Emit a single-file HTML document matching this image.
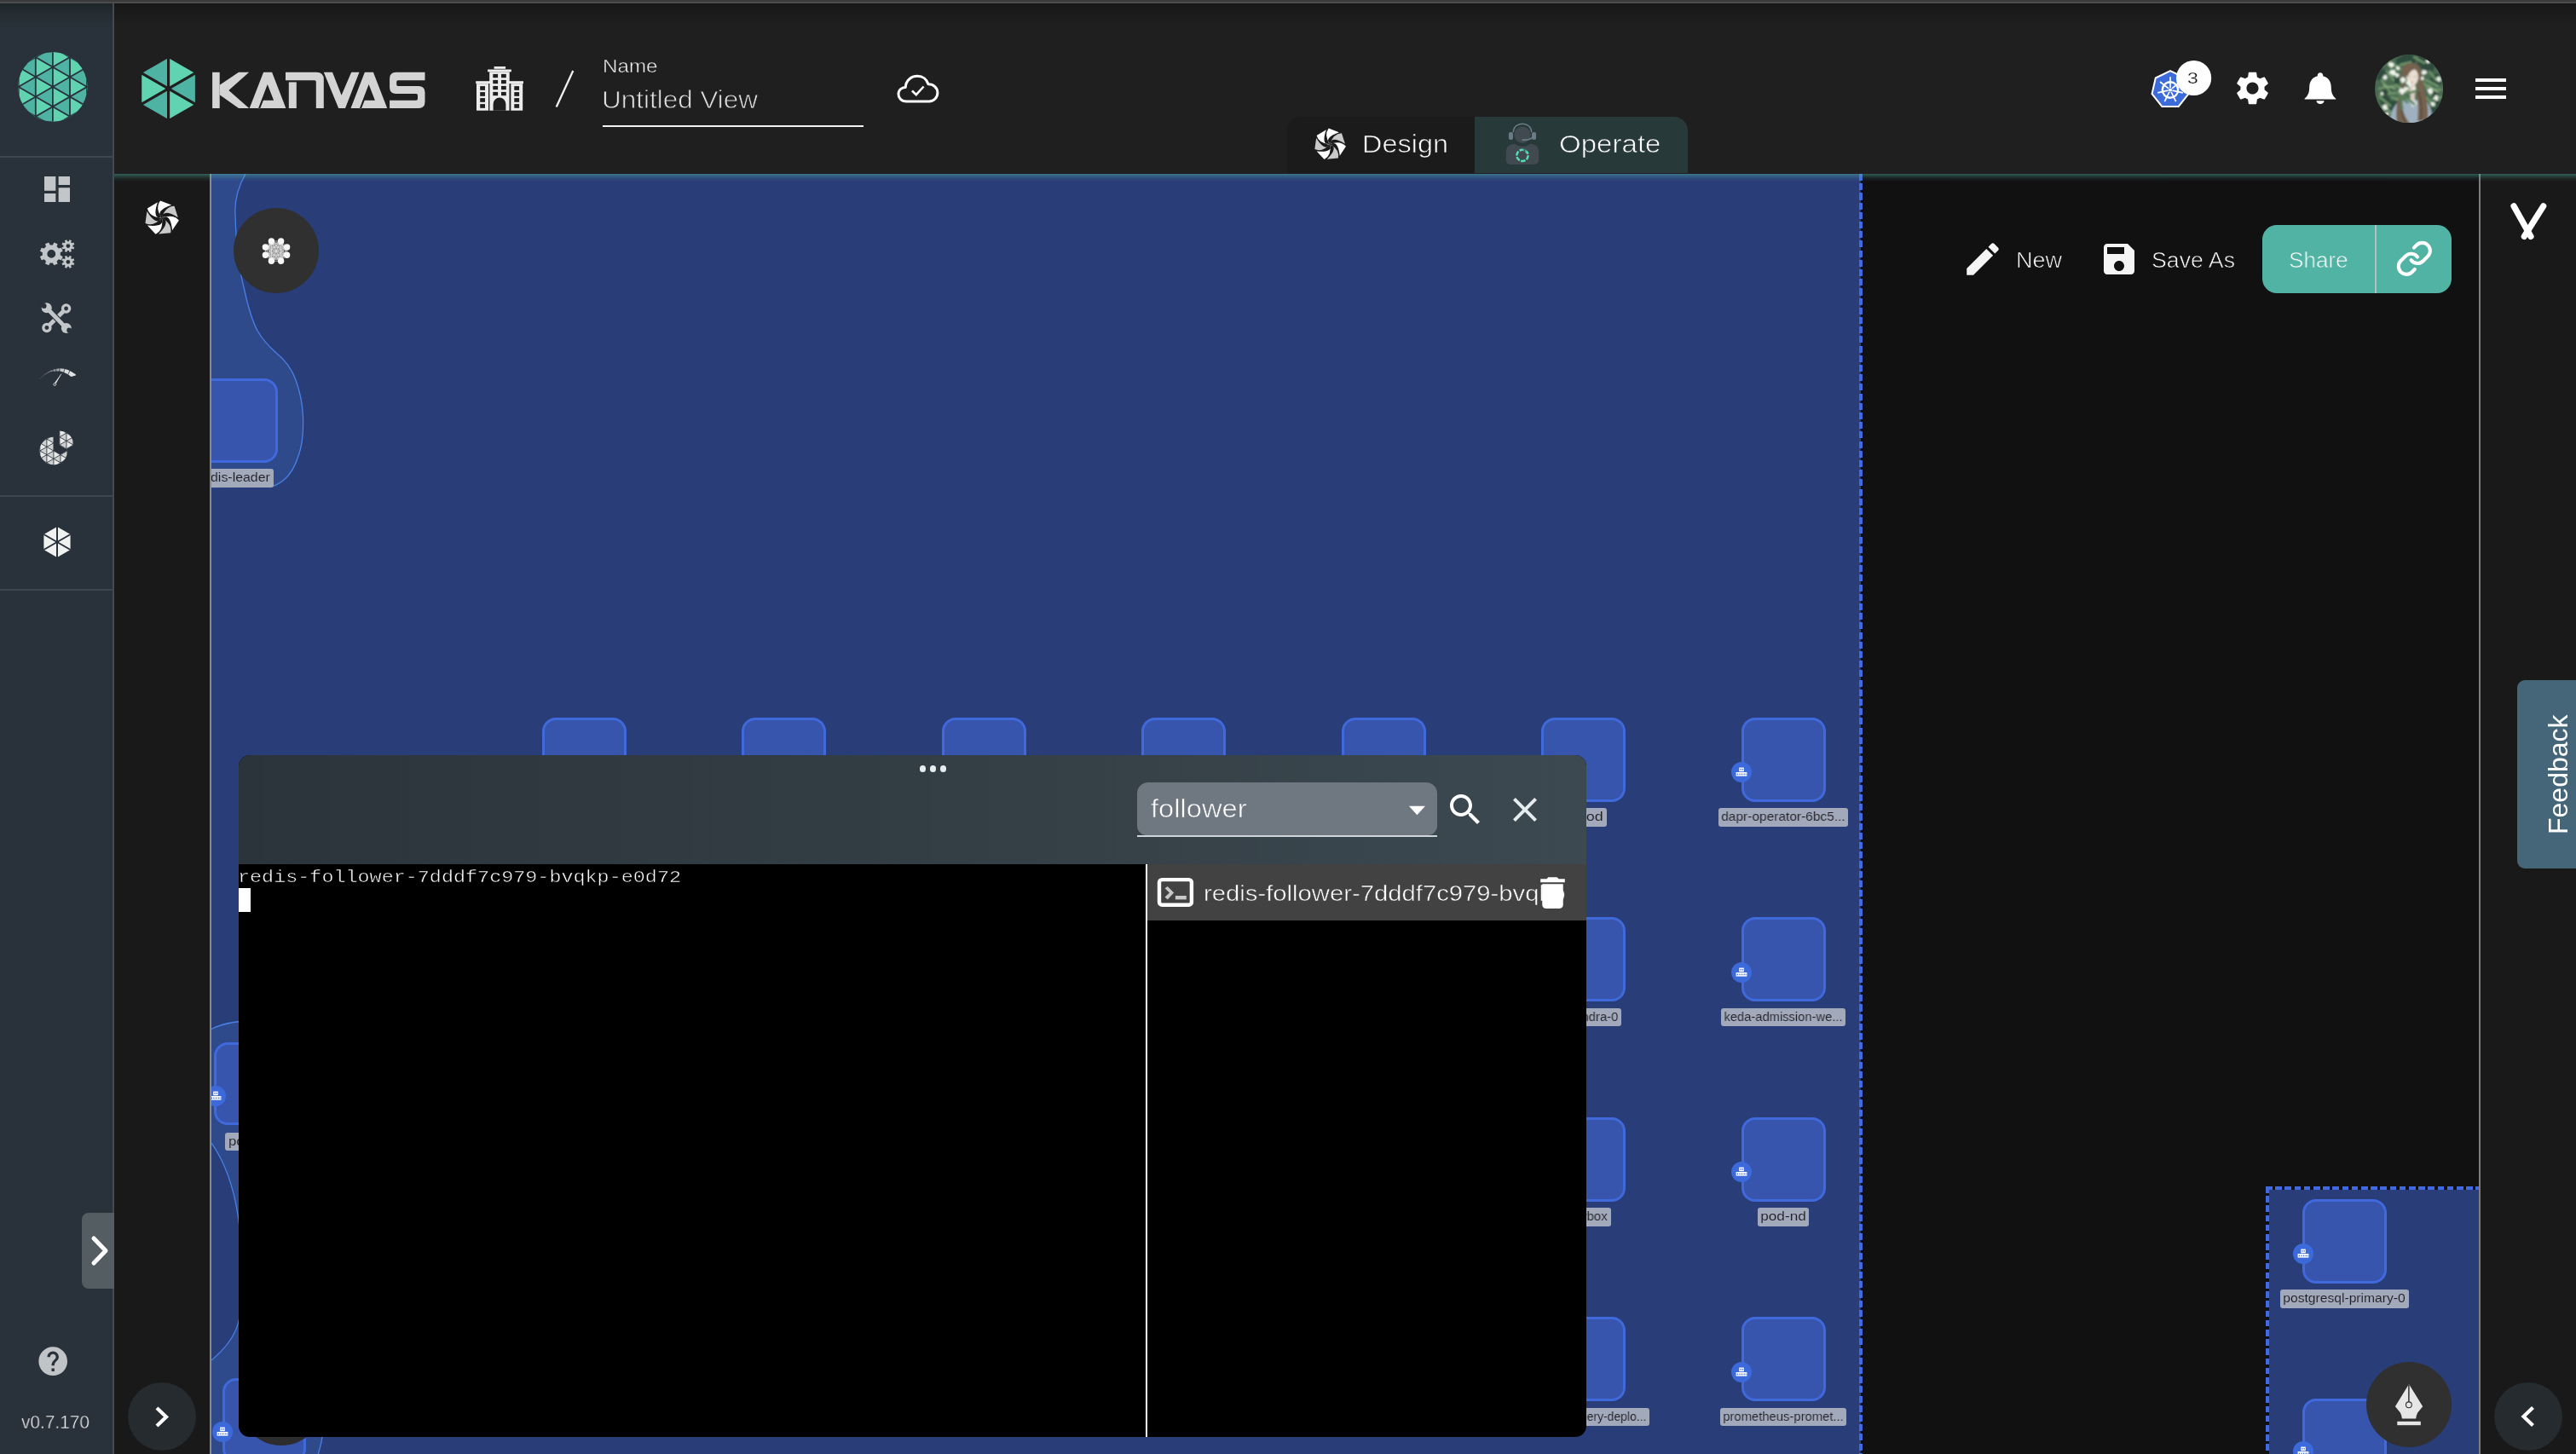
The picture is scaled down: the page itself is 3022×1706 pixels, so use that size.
<!DOCTYPE html>
<html>
<head>
<meta charset="utf-8">
<title>Kanvas</title>
<style>
*{box-sizing:border-box;margin:0;padding:0}
html,body{width:3022px;height:1706px;overflow:hidden;background:#111111;font-family:"Liberation Sans",sans-serif;}
.abs{position:absolute}
#root{position:relative;width:3022px;height:1706px;overflow:hidden;background:#111111}
.t{position:absolute;white-space:nowrap;line-height:1;transform-origin:0 0;will-change:transform}
.node{position:absolute;width:99px;height:99px;border:3.4px solid #4069dc;border-radius:16px;background:#3855ae}
.badge{position:absolute;width:24px;height:24px;border-radius:50%;background:#3d6adb}
.lbl{position:absolute;height:22px;border-radius:3px;background:#a3aabe;color:#1c1c1c;font-size:15.5px;line-height:22px;text-align:center;white-space:nowrap;overflow:hidden}
.lbl span{display:inline-block;transform-origin:50% 50%}
</style>
</head>
<body>
<div id="root">
<div class="abs" style="left:0;top:4px;width:132px;height:1702px;background:#29313a"></div>
<div class="abs" style="left:0;top:4px;width:132px;height:30px;background:linear-gradient(#1d2528 0,#232b30 30%,#272f36 62%,#29313a 100%)"></div>
<div class="abs" style="left:132px;top:4px;width:2px;height:1702px;background:#424b52"></div>
<div class="abs" style="left:0;top:183px;width:132px;height:2px;background:#3c464e"></div>
<div class="abs" style="left:0;top:581px;width:132px;height:2px;background:#3c464e"></div>
<div class="abs" style="left:0;top:691px;width:132px;height:2px;background:#3c464e"></div>
<div class="abs" style="left:134px;top:4px;width:2888px;height:200px;background:#1f1f1f"></div>
<div class="abs" style="left:134px;top:4px;width:2888px;height:24px;background:linear-gradient(#161616,#1f1f1f)"></div>
<div class="abs" style="left:134px;top:204px;width:112px;height:1502px;background:#191919"></div>
<div class="abs" style="left:246px;top:204px;width:2px;height:1502px;background:#8a8a8a"></div>
<div id="canvas" class="abs" style="left:248px;top:204px;width:1933px;height:1502px;background:#293d78;overflow:hidden">
<div class="abs" style="left:-248px;top:-204px;width:3022px;height:1706px">
<svg class="abs" style="left:0;top:0" width="3022" height="1706" viewBox="0 0 3022 1706">
<path d="M248,204 L288,204 C278,222 275,238 276,252 C277,290 281,318 286.5,339 C291,360 295,375 302,388 C309,400 316,407 324,414 C334,422 342,432 347,446 C352,460 355,474 355.5,489 C356,505 355,520 351,532 C347,546 341,557 332,564 C326,568.5 322,570.5 316,571.5 L248,573 Z" fill="#2f4a8b"/>
<path d="M288,204 C278,222 275,238 276,252 C277,290 281,318 286.5,339 C291,360 295,375 302,388 C309,400 316,407 324,414 C334,422 342,432 347,446 C352,460 355,474 355.5,489 C356,505 355,520 351,532 C347,546 341,557 332,564 C326,568.5 322,570.5 316,571.5" fill="none" stroke="#4a80e6" stroke-width="1.3"/>
<path d="M248,1207.5 Q262,1200.5 281,1198.5 L281,1440 Q274,1378 248,1341 Z" fill="#2f4a8b"/>
<path d="M248,1207.5 Q262,1200.5 281,1198.5" fill="none" stroke="#4a80e6" stroke-width="1.3"/>
<path d="M248,1341 Q274,1378 281,1440" fill="none" stroke="#4a80e6" stroke-width="1.3"/>
<path d="M248,1596 Q277,1572 281,1545 L281,1680 L379,1680 Q377,1696 372,1710 L248,1710 Z" fill="#2f4a8b"/>
<path d="M248,1596 Q277,1572 281,1545" fill="none" stroke="#4a80e6" stroke-width="1.3"/>
<path d="M379,1680 Q377,1696 372,1710" fill="none" stroke="#4a80e6" stroke-width="1.3"/>
</svg>
<div class="node" style="left:635.7px;top:841.7px"></div>
<div class="node" style="left:870.2px;top:841.7px"></div>
<div class="node" style="left:1104.6px;top:841.7px"></div>
<div class="node" style="left:1339.1px;top:841.7px"></div>
<div class="node" style="left:1573.6px;top:841.7px"></div>
<div class="node" style="left:1808.0px;top:841.7px"></div>
<div class="node" style="left:2042.5px;top:841.7px"></div>
<div class="node" style="left:1808.0px;top:1076.2px"></div>
<div class="node" style="left:2042.5px;top:1076.2px"></div>
<div class="node" style="left:1808.0px;top:1310.7px"></div>
<div class="node" style="left:2042.5px;top:1310.7px"></div>
<div class="node" style="left:1808.0px;top:1545.2px"></div>
<div class="node" style="left:2042.5px;top:1545.2px"></div>
<div class="badge" style="left:2031.0px;top:894.0px"><svg style="position:absolute;left:5px;top:6px" width="14" height="12" viewBox="0 0 14 12"><g fill="#fff"><rect x="4.2" y="0.6" width="5.6" height="4.6"/><rect x="0.6" y="6" width="12.8" height="4.6"/></g><g fill="#3d6adb"><rect x="5.4" y="2" width="1.2" height="1.6"/><rect x="7.6" y="2" width="1.2" height="1.6"/><rect x="1.8" y="7.6" width="1.2" height="1.6"/><rect x="4.4" y="7.6" width="1.2" height="1.6"/><rect x="7" y="7.6" width="1.2" height="1.6"/><rect x="9.6" y="7.6" width="1.2" height="1.6"/><rect x="11.6" y="7.6" width="0.9" height="1.6"/></g></svg></div>
<div class="badge" style="left:2031.0px;top:1128.5px"><svg style="position:absolute;left:5px;top:6px" width="14" height="12" viewBox="0 0 14 12"><g fill="#fff"><rect x="4.2" y="0.6" width="5.6" height="4.6"/><rect x="0.6" y="6" width="12.8" height="4.6"/></g><g fill="#3d6adb"><rect x="5.4" y="2" width="1.2" height="1.6"/><rect x="7.6" y="2" width="1.2" height="1.6"/><rect x="1.8" y="7.6" width="1.2" height="1.6"/><rect x="4.4" y="7.6" width="1.2" height="1.6"/><rect x="7" y="7.6" width="1.2" height="1.6"/><rect x="9.6" y="7.6" width="1.2" height="1.6"/><rect x="11.6" y="7.6" width="0.9" height="1.6"/></g></svg></div>
<div class="badge" style="left:2031.0px;top:1363.0px"><svg style="position:absolute;left:5px;top:6px" width="14" height="12" viewBox="0 0 14 12"><g fill="#fff"><rect x="4.2" y="0.6" width="5.6" height="4.6"/><rect x="0.6" y="6" width="12.8" height="4.6"/></g><g fill="#3d6adb"><rect x="5.4" y="2" width="1.2" height="1.6"/><rect x="7.6" y="2" width="1.2" height="1.6"/><rect x="1.8" y="7.6" width="1.2" height="1.6"/><rect x="4.4" y="7.6" width="1.2" height="1.6"/><rect x="7" y="7.6" width="1.2" height="1.6"/><rect x="9.6" y="7.6" width="1.2" height="1.6"/><rect x="11.6" y="7.6" width="0.9" height="1.6"/></g></svg></div>
<div class="badge" style="left:2031.0px;top:1597.5px"><svg style="position:absolute;left:5px;top:6px" width="14" height="12" viewBox="0 0 14 12"><g fill="#fff"><rect x="4.2" y="0.6" width="5.6" height="4.6"/><rect x="0.6" y="6" width="12.8" height="4.6"/></g><g fill="#3d6adb"><rect x="5.4" y="2" width="1.2" height="1.6"/><rect x="7.6" y="2" width="1.2" height="1.6"/><rect x="1.8" y="7.6" width="1.2" height="1.6"/><rect x="4.4" y="7.6" width="1.2" height="1.6"/><rect x="7" y="7.6" width="1.2" height="1.6"/><rect x="9.6" y="7.6" width="1.2" height="1.6"/><rect x="11.6" y="7.6" width="0.9" height="1.6"/></g></svg></div>
<div class="abs" style="left:2016.2px;top:948.0px;width:151.9px;height:21.7px;border-radius:3px;background:#a2a9bb;overflow:hidden"><div style="position:absolute;will-change:transform;left:50%;transform:translateX(-50%) scaleX(0.9992);transform-origin:50% 0;top:2.3px;font-size:15.5px;line-height:1;color:#1e1e22;-webkit-text-stroke:0.12px #a2a9bb;white-space:nowrap"><span id="l_dapr">dapr-operator-6bc5...</span></div></div>
<div class="abs" style="left:2019.0px;top:1182.5px;width:146.0px;height:21.7px;border-radius:3px;background:#a2a9bb;overflow:hidden"><div style="position:absolute;will-change:transform;left:50%;transform:translateX(-50%) scaleX(0.9491);transform-origin:50% 0;top:2.3px;font-size:15.5px;line-height:1;color:#1e1e22;-webkit-text-stroke:0.12px #a2a9bb;white-space:nowrap"><span id="l_keda">keda-admission-we...</span></div></div>
<div class="abs" style="left:2061.8px;top:1417.1px;width:60.4px;height:21.7px;border-radius:3px;background:#a2a9bb;overflow:hidden"><div style="position:absolute;will-change:transform;left:50%;transform:translateX(-50%) scaleX(1.1105);transform-origin:50% 0;top:2.3px;font-size:15.5px;line-height:1;color:#1e1e22;-webkit-text-stroke:0.12px #a2a9bb;white-space:nowrap"><span id="l_podnd">pod-nd</span></div></div>
<div class="abs" style="left:2017.9px;top:1651.6px;width:148.3px;height:21.7px;border-radius:3px;background:#a2a9bb;overflow:hidden"><div style="position:absolute;will-change:transform;left:50%;transform:translateX(-50%) scaleX(0.9549);transform-origin:50% 0;top:2.3px;font-size:15.5px;line-height:1;color:#1e1e22;-webkit-text-stroke:0.12px #a2a9bb;white-space:nowrap"><span id="l_prom">prometheus-promet...</span></div></div>
<div class="abs" style="left:1830.8px;top:948.0px;width:54.0px;height:21.7px;border-radius:3px;background:#a2a9bb;overflow:hidden"><div style="position:absolute;will-change:transform;right:3.7px;transform:scaleX(1.1600);transform-origin:100% 0;top:2.3px;font-size:15.5px;line-height:1;color:#1e1e22;-webkit-text-stroke:0.12px #a2a9bb;white-space:nowrap"><span id="l_od">a-pod</span></div></div>
<div class="abs" style="left:1813.2px;top:1182.5px;width:89.2px;height:21.7px;border-radius:3px;background:#a2a9bb;overflow:hidden"><div style="position:absolute;will-change:transform;right:3.7px;transform:scaleX(0.9555);transform-origin:100% 0;top:2.3px;font-size:15.5px;line-height:1;color:#1e1e22;-webkit-text-stroke:0.12px #a2a9bb;white-space:nowrap"><span id="l_dra">cassandra-0</span></div></div>
<div class="abs" style="left:1825.8px;top:1417.1px;width:64.0px;height:21.7px;border-radius:3px;background:#a2a9bb;overflow:hidden"><div style="position:absolute;will-change:transform;right:3.7px;transform:scaleX(0.9700);transform-origin:100% 0;top:2.3px;font-size:15.5px;line-height:1;color:#1e1e22;-webkit-text-stroke:0.12px #a2a9bb;white-space:nowrap"><span id="l_box">busybox</span></div></div>
<div class="abs" style="left:1780.9px;top:1651.6px;width:153.8px;height:21.7px;border-radius:3px;background:#a2a9bb;overflow:hidden"><div style="position:absolute;will-change:transform;right:3.7px;transform:scaleX(0.9008);transform-origin:100% 0;top:2.3px;font-size:15.5px;line-height:1;color:#1e1e22;-webkit-text-stroke:0.12px #a2a9bb;white-space:nowrap"><span id="l_ery">meshery-deplo...</span></div></div>
<div class="node" style="left:200px;top:444px;width:126px;height:99px"></div>
<div class="abs" style="left:230.0px;top:550.0px;width:91.4px;height:21.7px;border-radius:3px;background:#a2a9bb;overflow:hidden"><div style="position:absolute;will-change:transform;right:4.4px;transform:scaleX(1.0262);transform-origin:100% 0;top:2.3px;font-size:15.5px;line-height:1;color:#1e1e22;-webkit-text-stroke:0.12px #a2a9bb;white-space:nowrap"><span id="l_leader">redis-leader</span></div></div>
<div class="node" style="left:250.7px;top:1222.7px;width:99px;height:97.5px"></div>
<div class="badge" style="left:240.6px;top:1273.8px"><svg style="position:absolute;left:5px;top:6px" width="14" height="12" viewBox="0 0 14 12"><g fill="#fff"><rect x="4.2" y="0.6" width="5.6" height="4.6"/><rect x="0.6" y="6" width="12.8" height="4.6"/></g><g fill="#3d6adb"><rect x="5.4" y="2" width="1.2" height="1.6"/><rect x="7.6" y="2" width="1.2" height="1.6"/><rect x="1.8" y="7.6" width="1.2" height="1.6"/><rect x="4.4" y="7.6" width="1.2" height="1.6"/><rect x="7" y="7.6" width="1.2" height="1.6"/><rect x="9.6" y="7.6" width="1.2" height="1.6"/><rect x="11.6" y="7.6" width="0.9" height="1.6"/></g></svg></div>
<div class="abs" style="left:264.0px;top:1328.6px;width:66.0px;height:21.7px;border-radius:3px;background:#a2a9bb;overflow:hidden"><div style="position:absolute;will-change:transform;left:4.0px;transform:scaleX(1.0821);transform-origin:0 0;top:2.3px;font-size:15.5px;line-height:1;color:#1e1e22;-webkit-text-stroke:0.12px #a2a9bb;white-space:nowrap"><span id="l_pc">pod</span></div></div>
<div class="node" style="left:260.5px;top:1617px;width:98.5px;height:99px"></div>
<div class="abs" style="left:280px;top:1596px;width:100px;height:100px;border-radius:50%;background:#2d2d2f"></div>
<div class="badge" style="left:249.0px;top:1668.4px"><svg style="position:absolute;left:5px;top:6px" width="14" height="12" viewBox="0 0 14 12"><g fill="#fff"><rect x="4.2" y="0.6" width="5.6" height="4.6"/><rect x="0.6" y="6" width="12.8" height="4.6"/></g><g fill="#3d6adb"><rect x="5.4" y="2" width="1.2" height="1.6"/><rect x="7.6" y="2" width="1.2" height="1.6"/><rect x="1.8" y="7.6" width="1.2" height="1.6"/><rect x="4.4" y="7.6" width="1.2" height="1.6"/><rect x="7" y="7.6" width="1.2" height="1.6"/><rect x="9.6" y="7.6" width="1.2" height="1.6"/><rect x="11.6" y="7.6" width="0.9" height="1.6"/></g></svg></div>
<div class="abs" style="left:273.8px;top:243.9px;width:100px;height:100px;border-radius:50%;background:#303030"></div>
<svg class="abs" style="left:299.8px;top:269.9px" width="48" height="48" viewBox="-24 -24 48 48"><rect x="-9" y="-8.5" width="18" height="18" rx="3" fill="#9a9a9a"/><g stroke="#e8e8e8" stroke-width="0.7" fill="none"><line x1="-5.6" y1="-11.0" x2="5.6" y2="-11.0"/><line x1="-5.6" y1="-11.0" x2="12.6" y2="-4.0"/><line x1="-5.6" y1="-11.0" x2="12.6" y2="5.2"/><line x1="-5.6" y1="-11.0" x2="5.6" y2="12.2"/><line x1="-5.6" y1="-11.0" x2="-5.6" y2="12.2"/><line x1="-5.6" y1="-11.0" x2="-12.6" y2="5.2"/><line x1="-5.6" y1="-11.0" x2="-12.6" y2="-4.0"/><line x1="5.6" y1="-11.0" x2="12.6" y2="-4.0"/><line x1="5.6" y1="-11.0" x2="12.6" y2="5.2"/><line x1="5.6" y1="-11.0" x2="5.6" y2="12.2"/><line x1="5.6" y1="-11.0" x2="-5.6" y2="12.2"/><line x1="5.6" y1="-11.0" x2="-12.6" y2="5.2"/><line x1="5.6" y1="-11.0" x2="-12.6" y2="-4.0"/><line x1="12.6" y1="-4.0" x2="12.6" y2="5.2"/><line x1="12.6" y1="-4.0" x2="5.6" y2="12.2"/><line x1="12.6" y1="-4.0" x2="-5.6" y2="12.2"/><line x1="12.6" y1="-4.0" x2="-12.6" y2="5.2"/><line x1="12.6" y1="-4.0" x2="-12.6" y2="-4.0"/><line x1="12.6" y1="5.2" x2="5.6" y2="12.2"/><line x1="12.6" y1="5.2" x2="-5.6" y2="12.2"/><line x1="12.6" y1="5.2" x2="-12.6" y2="5.2"/><line x1="12.6" y1="5.2" x2="-12.6" y2="-4.0"/><line x1="5.6" y1="12.2" x2="-5.6" y2="12.2"/><line x1="5.6" y1="12.2" x2="-12.6" y2="5.2"/><line x1="5.6" y1="12.2" x2="-12.6" y2="-4.0"/><line x1="-5.6" y1="12.2" x2="-12.6" y2="5.2"/><line x1="-5.6" y1="12.2" x2="-12.6" y2="-4.0"/><line x1="-12.6" y1="5.2" x2="-12.6" y2="-4.0"/></g><circle cx="-5.6" cy="-11.0" r="3.7" fill="#f7f7f7"/><circle cx="5.6" cy="-11.0" r="3.7" fill="#f7f7f7"/><circle cx="12.6" cy="-4.0" r="3.7" fill="#f7f7f7"/><circle cx="12.6" cy="5.2" r="3.7" fill="#f7f7f7"/><circle cx="5.6" cy="12.2" r="3.7" fill="#f7f7f7"/><circle cx="-5.6" cy="12.2" r="3.7" fill="#f7f7f7"/><circle cx="-12.6" cy="5.2" r="3.7" fill="#f7f7f7"/><circle cx="-12.6" cy="-4.0" r="3.7" fill="#f7f7f7"/></svg>
</div>
</div>
<div class="abs" style="left:2181px;top:204px;width:2px;height:1502px;background:#293d78"></div>
<div class="abs" style="left:2183px;top:204px;width:3px;height:1502px;background:#0b0b0b"></div>
<div class="abs" style="left:2180.8px;top:203.6px;width:4.2px;height:1503px;background:repeating-linear-gradient(180deg,#4169e1 0,#4169e1 8.1px,transparent 8.1px,transparent 11.2px)"></div>
<div class="abs" style="left:2908px;top:204px;width:2px;height:1502px;background:#7d7d7d"></div>
<div class="abs" style="left:2910px;top:204px;width:112px;height:1502px;background:#191919"></div>
<div class="abs" style="left:134px;top:203.7px;width:2888px;height:9px;background:linear-gradient(rgba(81,179,163,0.46) 0,rgba(81,179,163,0.30) 25%,rgba(81,179,163,0.10) 60%,rgba(81,179,163,0) 100%)"></div>
<div class="abs" style="left:0;top:0;width:3022px;height:4px;background:linear-gradient(#3a3a3a 0,#3a3a3a 50%,#4a4c4b 50%,#4a4c4b 100%)"></div>
<!-- SIDEBAR CONTENT -->
<svg class="abs" style="left:12px;top:52px" width="100" height="100" viewBox="0 0 100 100"><defs><clipPath id="lc"><circle cx="49.9" cy="49.9" r="40.6"/></clipPath></defs><g clip-path="url(#lc)"><rect x="0" y="0" width="100" height="100" fill="#4fb3a3"/><polygon points="-10.40,-31.30 -10.40,-8.10 9.70,-19.70" fill="#60d3b1"/><polygon points="-10.40,-8.10 -10.40,15.10 9.70,3.50" fill="#60d3b1"/><polygon points="-10.40,15.10 -10.40,38.30 9.70,26.70" fill="#60d3b1"/><polygon points="-10.40,38.30 -10.40,61.50 9.70,49.90" fill="#60d3b1"/><polygon points="-10.40,61.50 -10.40,84.70 9.70,73.10" fill="#60d3b1"/><polygon points="-10.40,84.70 -10.40,107.90 9.70,96.30" fill="#60d3b1"/><polygon points="-10.40,107.90 -10.40,131.10 9.70,119.50" fill="#60d3b1"/><polygon points="-10.40,131.10 -10.40,154.30 9.70,142.70" fill="#60d3b1"/><polygon points="9.70,-42.90 9.70,-19.70 29.80,-31.30" fill="#60d3b1"/><polygon points="9.70,-19.70 9.70,3.50 29.80,-8.10" fill="#60d3b1"/><polygon points="9.70,3.50 9.70,26.70 29.80,15.10" fill="#60d3b1"/><polygon points="9.70,26.70 9.70,49.90 29.80,38.30" fill="#60d3b1"/><polygon points="9.70,49.90 9.70,73.10 29.80,61.50" fill="#60d3b1"/><polygon points="9.70,73.10 9.70,96.30 29.80,84.70" fill="#60d3b1"/><polygon points="9.70,96.30 9.70,119.50 29.80,107.90" fill="#60d3b1"/><polygon points="9.70,119.50 9.70,142.70 29.80,131.10" fill="#60d3b1"/><polygon points="29.80,-31.30 29.80,-8.10 49.90,-19.70" fill="#60d3b1"/><polygon points="29.80,-8.10 29.80,15.10 49.90,3.50" fill="#60d3b1"/><polygon points="29.80,15.10 29.80,38.30 49.90,26.70" fill="#60d3b1"/><polygon points="29.80,38.30 29.80,61.50 49.90,49.90" fill="#60d3b1"/><polygon points="29.80,61.50 29.80,84.70 49.90,73.10" fill="#60d3b1"/><polygon points="29.80,84.70 29.80,107.90 49.90,96.30" fill="#60d3b1"/><polygon points="29.80,107.90 29.80,131.10 49.90,119.50" fill="#60d3b1"/><polygon points="29.80,131.10 29.80,154.30 49.90,142.70" fill="#60d3b1"/><polygon points="49.90,-42.90 49.90,-19.70 70.00,-31.30" fill="#60d3b1"/><polygon points="49.90,-19.70 49.90,3.50 70.00,-8.10" fill="#60d3b1"/><polygon points="49.90,3.50 49.90,26.70 70.00,15.10" fill="#60d3b1"/><polygon points="49.90,26.70 49.90,49.90 70.00,38.30" fill="#60d3b1"/><polygon points="49.90,49.90 49.90,73.10 70.00,61.50" fill="#60d3b1"/><polygon points="49.90,73.10 49.90,96.30 70.00,84.70" fill="#60d3b1"/><polygon points="49.90,96.30 49.90,119.50 70.00,107.90" fill="#60d3b1"/><polygon points="49.90,119.50 49.90,142.70 70.00,131.10" fill="#60d3b1"/><polygon points="70.00,-31.30 70.00,-8.10 90.10,-19.70" fill="#60d3b1"/><polygon points="70.00,-8.10 70.00,15.10 90.10,3.50" fill="#60d3b1"/><polygon points="70.00,15.10 70.00,38.30 90.10,26.70" fill="#60d3b1"/><polygon points="70.00,38.30 70.00,61.50 90.10,49.90" fill="#60d3b1"/><polygon points="70.00,61.50 70.00,84.70 90.10,73.10" fill="#60d3b1"/><polygon points="70.00,84.70 70.00,107.90 90.10,96.30" fill="#60d3b1"/><polygon points="70.00,107.90 70.00,131.10 90.10,119.50" fill="#60d3b1"/><polygon points="70.00,131.10 70.00,154.30 90.10,142.70" fill="#60d3b1"/><polygon points="90.10,-42.90 90.10,-19.70 110.20,-31.30" fill="#60d3b1"/><polygon points="90.10,-19.70 90.10,3.50 110.20,-8.10" fill="#60d3b1"/><polygon points="90.10,3.50 90.10,26.70 110.20,15.10" fill="#60d3b1"/><polygon points="90.10,26.70 90.10,49.90 110.20,38.30" fill="#60d3b1"/><polygon points="90.10,49.90 90.10,73.10 110.20,61.50" fill="#60d3b1"/><polygon points="90.10,73.10 90.10,96.30 110.20,84.70" fill="#60d3b1"/><polygon points="90.10,96.30 90.10,119.50 110.20,107.90" fill="#60d3b1"/><polygon points="90.10,119.50 90.10,142.70 110.20,131.10" fill="#60d3b1"/><g stroke="#29313a" stroke-width="1.8"><line x1="9.70" y1="0" x2="9.70" y2="100"/><line x1="29.80" y1="0" x2="29.80" y2="100"/><line x1="49.90" y1="0" x2="49.90" y2="100"/><line x1="70.00" y1="0" x2="70.00" y2="100"/><line x1="90.10" y1="0" x2="90.10" y2="100"/><line x1="0" y1="-94.90" x2="100" y2="-37.19"/><line x1="0" y1="-37.30" x2="100" y2="-95.01"/><line x1="0" y1="-71.70" x2="100" y2="-13.99"/><line x1="0" y1="-14.10" x2="100" y2="-71.81"/><line x1="0" y1="-48.50" x2="100" y2="9.21"/><line x1="0" y1="9.10" x2="100" y2="-48.61"/><line x1="0" y1="-25.30" x2="100" y2="32.41"/><line x1="0" y1="32.30" x2="100" y2="-25.41"/><line x1="0" y1="-2.10" x2="100" y2="55.61"/><line x1="0" y1="55.50" x2="100" y2="-2.21"/><line x1="0" y1="21.10" x2="100" y2="78.81"/><line x1="0" y1="78.70" x2="100" y2="20.99"/><line x1="0" y1="44.30" x2="100" y2="102.01"/><line x1="0" y1="101.90" x2="100" y2="44.19"/><line x1="0" y1="67.50" x2="100" y2="125.21"/><line x1="0" y1="125.10" x2="100" y2="67.39"/><line x1="0" y1="90.70" x2="100" y2="148.41"/><line x1="0" y1="148.30" x2="100" y2="90.59"/><line x1="0" y1="113.90" x2="100" y2="171.61"/><line x1="0" y1="171.50" x2="100" y2="113.79"/><line x1="0" y1="137.10" x2="100" y2="194.81"/><line x1="0" y1="194.70" x2="100" y2="136.99"/></g></g></svg>
<!-- dashboard icon -->
<svg class="abs" style="left:47px;top:202px" width="40" height="40" viewBox="0 0 24 24"><path fill="#c3c6c8" d="M3 13h8V3H3v10zm0 8h8v-6H3v6zm10 0h8V11h-8v10zm0-18v6h8V3h-8z"/></svg>
<!-- gears / tools / gauge / pie / hexagon : one svg in root coordinates -->
<svg class="abs" style="left:0;top:0" width="134" height="720" viewBox="0 0 134 720">
<path fill="#c3c6c8" fill-rule="evenodd" d="M70.78,299.48 L73.65,300.99 L71.92,305.15 L68.83,304.20 L66.60,306.43 L67.55,309.52 L63.39,311.25 L61.88,308.38 L58.72,308.38 L57.21,311.25 L53.05,309.52 L54.00,306.43 L51.77,304.20 L48.68,305.15 L46.95,300.99 L49.82,299.48 L49.82,296.32 L46.95,294.81 L48.68,290.65 L51.77,291.60 L54.00,289.37 L53.05,286.28 L57.21,284.55 L58.72,287.42 L61.88,287.42 L63.39,284.55 L67.55,286.28 L66.60,289.37 L68.83,291.60 L71.92,290.65 L73.65,294.81 L70.78,296.32Z M55.40,297.90 a4.90,4.90 0 1,0 9.80,0 a4.90,4.90 0 1,0 -9.80,0Z"/><path fill="#c3c6c8" fill-rule="evenodd" d="M85.34,289.42 L87.30,290.32 L86.35,292.62 L84.32,291.87 L83.17,293.02 L83.92,295.05 L81.62,296.00 L80.72,294.04 L79.08,294.04 L78.18,296.00 L75.88,295.05 L76.63,293.02 L75.48,291.87 L73.45,292.62 L72.50,290.32 L74.46,289.42 L74.46,287.78 L72.50,286.88 L73.45,284.58 L75.48,285.33 L76.63,284.18 L75.88,282.15 L78.18,281.20 L79.08,283.16 L80.72,283.16 L81.62,281.20 L83.92,282.15 L83.17,284.18 L84.32,285.33 L86.35,284.58 L87.30,286.88 L85.34,287.78Z M77.50,288.60 a2.40,2.40 0 1,0 4.80,0 a2.40,2.40 0 1,0 -4.80,0Z"/><path fill="#c3c6c8" fill-rule="evenodd" d="M85.34,308.12 L87.30,309.02 L86.35,311.32 L84.32,310.57 L83.17,311.72 L83.92,313.75 L81.62,314.70 L80.72,312.74 L79.08,312.74 L78.18,314.70 L75.88,313.75 L76.63,311.72 L75.48,310.57 L73.45,311.32 L72.50,309.02 L74.46,308.12 L74.46,306.48 L72.50,305.58 L73.45,303.28 L75.48,304.03 L76.63,302.88 L75.88,300.85 L78.18,299.90 L79.08,301.86 L80.72,301.86 L81.62,299.90 L83.92,300.85 L83.17,302.88 L84.32,304.03 L86.35,303.28 L87.30,305.58 L85.34,306.48Z M77.50,307.30 a2.40,2.40 0 1,0 4.80,0 a2.40,2.40 0 1,0 -4.80,0Z"/>
<!-- tools: crossed wrenches -->
<g>
<line x1="54.9" y1="384.5" x2="77.6" y2="362" stroke="#c3c6c8" stroke-width="4.9"/>
<circle cx="77.6" cy="362" r="5.7" fill="#c3c6c8"/><circle cx="54.9" cy="384.5" r="5.7" fill="#c3c6c8"/>
<circle cx="77.6" cy="362" r="2.4" fill="#29313a"/><circle cx="54.9" cy="384.5" r="2.4" fill="#29313a"/>
<line x1="59" y1="365.7" x2="73.6" y2="380.8" stroke="#29313a" stroke-width="7"/>
<line x1="54.75" y1="361.3" x2="77.8" y2="385.1" stroke="#c3c6c8" stroke-width="4.9"/>
<circle cx="54.75" cy="361.3" r="6" fill="#c3c6c8"/><circle cx="77.8" cy="385.1" r="6" fill="#c3c6c8"/>
<circle cx="51.7" cy="359" r="2.9" fill="#29313a"/><circle cx="81.2" cy="387.4" r="2.9" fill="#29313a"/>
<line x1="51.7" y1="359" x2="45.6" y2="354.4" stroke="#29313a" stroke-width="5.2"/>
<line x1="81.2" y1="387.4" x2="87.3" y2="392" stroke="#29313a" stroke-width="5.2"/>
</g>
<!-- gauge -->
<defs><linearGradient id="gg" x1="46" y1="0" x2="89" y2="0" gradientUnits="userSpaceOnUse"><stop offset="0" stop-color="#c3c6c8" stop-opacity="0.15"/><stop offset="0.45" stop-color="#c9cccd" stop-opacity="0.7"/><stop offset="0.7" stop-color="#dcdede" stop-opacity="1"/><stop offset="1" stop-color="#e0e1e1" stop-opacity="1"/></linearGradient></defs>
<path d="M46,444.6 Q52,438.6 58.9,435.1 Q64.5,432.6 70.3,432.3 Q75.5,432.5 79.7,434 Q84.8,436.2 88.8,439.3 L88.8,440.6 L83.5,442.1 Q80.8,439.7 77.8,438.2 Q74,436.2 70.3,435.5 Q64.5,435.2 58.9,436.3 Q52,439.5 46.2,445 Z" fill="url(#gg)"/>
<g stroke="#29313a" stroke-width="0.8"><line x1="76.3" y1="432" x2="74.3" y2="438"/><line x1="82.3" y1="434" x2="79.5" y2="440"/><line x1="70" y1="431" x2="69.5" y2="437"/><line x1="65.5" y1="431.5" x2="66" y2="437"/><line x1="61.5" y1="433" x2="62.5" y2="437"/></g>
<path d="M63.6,450.2 L71.9,438.7 L64.9,451 Z" fill="#dfe1e2" stroke="#dfe1e2" stroke-width="0.5"/>
<circle cx="64.3" cy="451" r="1.45" fill="#29313a" stroke="#d6d8d9" stroke-width="0.9"/>
<!-- pie -->
<defs><clipPath id="pcirc"><circle cx="62.88" cy="529.00" r="16.26"/></clipPath><clipPath id="pkeep"><path d="M62.88,509.74 L62.88,529.00 L70.90,533.63 L79.22,528.80 L83.14,527.00 L83.14,549.26 L42.62,549.26 L42.62,509.74 Z"/></clipPath><clipPath id="pmiss"><path d="M62.88,509.74 L62.88,529.00 L70.90,533.63 L79.22,528.80 L83.14,527.00 L83.14,509.74 Z"/></clipPath></defs><g clip-path="url(#pcirc)"><g clip-path="url(#pkeep)"><rect x="44.6" y="510.7" width="36.5" height="36.5" fill="#cdcfd0"/><polygon points="38.82,505.82 38.82,515.10 46.84,510.46" fill="#e9e9e9"/><polygon points="38.82,515.10 38.82,524.37 46.84,519.73" fill="#e9e9e9"/><polygon points="38.82,524.37 38.82,533.63 46.84,529.00" fill="#e9e9e9"/><polygon points="38.82,533.63 38.82,542.90 46.84,538.27" fill="#e9e9e9"/><polygon points="38.82,542.90 38.82,552.17 46.84,547.54" fill="#e9e9e9"/><polygon points="38.82,552.17 38.82,561.44 46.84,556.81" fill="#e9e9e9"/><polygon points="46.84,501.19 46.84,510.46 54.86,505.82" fill="#e9e9e9"/><polygon points="46.84,510.46 46.84,519.73 54.86,515.10" fill="#e9e9e9"/><polygon points="46.84,519.73 46.84,529.00 54.86,524.37" fill="#e9e9e9"/><polygon points="46.84,529.00 46.84,538.27 54.86,533.63" fill="#e9e9e9"/><polygon points="46.84,538.27 46.84,547.54 54.86,542.90" fill="#e9e9e9"/><polygon points="46.84,547.54 46.84,556.81 54.86,552.17" fill="#e9e9e9"/><polygon points="54.86,505.82 54.86,515.10 62.88,510.46" fill="#e9e9e9"/><polygon points="54.86,515.10 54.86,524.37 62.88,519.73" fill="#e9e9e9"/><polygon points="54.86,524.37 54.86,533.63 62.88,529.00" fill="#e9e9e9"/><polygon points="54.86,533.63 54.86,542.90 62.88,538.27" fill="#e9e9e9"/><polygon points="54.86,542.90 54.86,552.17 62.88,547.54" fill="#e9e9e9"/><polygon points="54.86,552.17 54.86,561.44 62.88,556.81" fill="#e9e9e9"/><polygon points="62.88,501.19 62.88,510.46 70.90,505.82" fill="#e9e9e9"/><polygon points="62.88,510.46 62.88,519.73 70.90,515.10" fill="#e9e9e9"/><polygon points="62.88,519.73 62.88,529.00 70.90,524.37" fill="#e9e9e9"/><polygon points="62.88,529.00 62.88,538.27 70.90,533.63" fill="#e9e9e9"/><polygon points="62.88,538.27 62.88,547.54 70.90,542.90" fill="#e9e9e9"/><polygon points="62.88,547.54 62.88,556.81 70.90,552.17" fill="#e9e9e9"/><polygon points="70.90,505.82 70.90,515.10 78.92,510.46" fill="#e9e9e9"/><polygon points="70.90,515.10 70.90,524.37 78.92,519.73" fill="#e9e9e9"/><polygon points="70.90,524.37 70.90,533.63 78.92,529.00" fill="#e9e9e9"/><polygon points="70.90,533.63 70.90,542.90 78.92,538.27" fill="#e9e9e9"/><polygon points="70.90,542.90 70.90,552.17 78.92,547.54" fill="#e9e9e9"/><polygon points="70.90,552.17 70.90,561.44 78.92,556.81" fill="#e9e9e9"/><polygon points="78.92,501.19 78.92,510.46 86.94,505.82" fill="#e9e9e9"/><polygon points="78.92,510.46 78.92,519.73 86.94,515.10" fill="#e9e9e9"/><polygon points="78.92,519.73 78.92,529.00 86.94,524.37" fill="#e9e9e9"/><polygon points="78.92,529.00 78.92,538.27 86.94,533.63" fill="#e9e9e9"/><polygon points="78.92,538.27 78.92,547.54 86.94,542.90" fill="#e9e9e9"/><polygon points="78.92,547.54 78.92,556.81 86.94,552.17" fill="#e9e9e9"/><g stroke="#29313a" stroke-width="0.85"><line x1="46.84" y1="510.7" x2="46.84" y2="547.3"/><line x1="54.86" y1="510.7" x2="54.86" y2="547.3"/><line x1="62.88" y1="510.7" x2="62.88" y2="547.3"/><line x1="70.90" y1="510.7" x2="70.90" y2="547.3"/><line x1="78.92" y1="510.7" x2="78.92" y2="547.3"/><line x1="44.62" y1="481.37" x2="81.14" y2="502.47"/><line x1="44.62" y1="502.47" x2="81.14" y2="481.37"/><line x1="44.62" y1="490.64" x2="81.14" y2="511.74"/><line x1="44.62" y1="511.74" x2="81.14" y2="490.64"/><line x1="44.62" y1="499.91" x2="81.14" y2="521.01"/><line x1="44.62" y1="521.01" x2="81.14" y2="499.91"/><line x1="44.62" y1="509.18" x2="81.14" y2="530.28"/><line x1="44.62" y1="530.28" x2="81.14" y2="509.18"/><line x1="44.62" y1="518.45" x2="81.14" y2="539.55"/><line x1="44.62" y1="539.55" x2="81.14" y2="518.45"/><line x1="44.62" y1="527.72" x2="81.14" y2="548.82"/><line x1="44.62" y1="548.82" x2="81.14" y2="527.72"/><line x1="44.62" y1="536.99" x2="81.14" y2="558.09"/><line x1="44.62" y1="558.09" x2="81.14" y2="536.99"/><line x1="44.62" y1="546.26" x2="81.14" y2="567.36"/><line x1="44.62" y1="567.36" x2="81.14" y2="546.26"/><line x1="44.62" y1="555.53" x2="81.14" y2="576.63"/><line x1="44.62" y1="576.63" x2="81.14" y2="555.53"/></g></g></g><g transform="translate(7,-7)"><g clip-path="url(#pcirc)"><g clip-path="url(#pmiss)"><rect x="44.6" y="510.7" width="36.5" height="36.5" fill="#cdcfd0"/><polygon points="38.82,505.82 38.82,515.10 46.84,510.46" fill="#e9e9e9"/><polygon points="38.82,515.10 38.82,524.37 46.84,519.73" fill="#e9e9e9"/><polygon points="38.82,524.37 38.82,533.63 46.84,529.00" fill="#e9e9e9"/><polygon points="38.82,533.63 38.82,542.90 46.84,538.27" fill="#e9e9e9"/><polygon points="38.82,542.90 38.82,552.17 46.84,547.54" fill="#e9e9e9"/><polygon points="38.82,552.17 38.82,561.44 46.84,556.81" fill="#e9e9e9"/><polygon points="46.84,501.19 46.84,510.46 54.86,505.82" fill="#e9e9e9"/><polygon points="46.84,510.46 46.84,519.73 54.86,515.10" fill="#e9e9e9"/><polygon points="46.84,519.73 46.84,529.00 54.86,524.37" fill="#e9e9e9"/><polygon points="46.84,529.00 46.84,538.27 54.86,533.63" fill="#e9e9e9"/><polygon points="46.84,538.27 46.84,547.54 54.86,542.90" fill="#e9e9e9"/><polygon points="46.84,547.54 46.84,556.81 54.86,552.17" fill="#e9e9e9"/><polygon points="54.86,505.82 54.86,515.10 62.88,510.46" fill="#e9e9e9"/><polygon points="54.86,515.10 54.86,524.37 62.88,519.73" fill="#e9e9e9"/><polygon points="54.86,524.37 54.86,533.63 62.88,529.00" fill="#e9e9e9"/><polygon points="54.86,533.63 54.86,542.90 62.88,538.27" fill="#e9e9e9"/><polygon points="54.86,542.90 54.86,552.17 62.88,547.54" fill="#e9e9e9"/><polygon points="54.86,552.17 54.86,561.44 62.88,556.81" fill="#e9e9e9"/><polygon points="62.88,501.19 62.88,510.46 70.90,505.82" fill="#e9e9e9"/><polygon points="62.88,510.46 62.88,519.73 70.90,515.10" fill="#e9e9e9"/><polygon points="62.88,519.73 62.88,529.00 70.90,524.37" fill="#e9e9e9"/><polygon points="62.88,529.00 62.88,538.27 70.90,533.63" fill="#e9e9e9"/><polygon points="62.88,538.27 62.88,547.54 70.90,542.90" fill="#e9e9e9"/><polygon points="62.88,547.54 62.88,556.81 70.90,552.17" fill="#e9e9e9"/><polygon points="70.90,505.82 70.90,515.10 78.92,510.46" fill="#e9e9e9"/><polygon points="70.90,515.10 70.90,524.37 78.92,519.73" fill="#e9e9e9"/><polygon points="70.90,524.37 70.90,533.63 78.92,529.00" fill="#e9e9e9"/><polygon points="70.90,533.63 70.90,542.90 78.92,538.27" fill="#e9e9e9"/><polygon points="70.90,542.90 70.90,552.17 78.92,547.54" fill="#e9e9e9"/><polygon points="70.90,552.17 70.90,561.44 78.92,556.81" fill="#e9e9e9"/><polygon points="78.92,501.19 78.92,510.46 86.94,505.82" fill="#e9e9e9"/><polygon points="78.92,510.46 78.92,519.73 86.94,515.10" fill="#e9e9e9"/><polygon points="78.92,519.73 78.92,529.00 86.94,524.37" fill="#e9e9e9"/><polygon points="78.92,529.00 78.92,538.27 86.94,533.63" fill="#e9e9e9"/><polygon points="78.92,538.27 78.92,547.54 86.94,542.90" fill="#e9e9e9"/><polygon points="78.92,547.54 78.92,556.81 86.94,552.17" fill="#e9e9e9"/><g stroke="#29313a" stroke-width="0.85"><line x1="46.84" y1="510.7" x2="46.84" y2="547.3"/><line x1="54.86" y1="510.7" x2="54.86" y2="547.3"/><line x1="62.88" y1="510.7" x2="62.88" y2="547.3"/><line x1="70.90" y1="510.7" x2="70.90" y2="547.3"/><line x1="78.92" y1="510.7" x2="78.92" y2="547.3"/><line x1="44.62" y1="481.37" x2="81.14" y2="502.47"/><line x1="44.62" y1="502.47" x2="81.14" y2="481.37"/><line x1="44.62" y1="490.64" x2="81.14" y2="511.74"/><line x1="44.62" y1="511.74" x2="81.14" y2="490.64"/><line x1="44.62" y1="499.91" x2="81.14" y2="521.01"/><line x1="44.62" y1="521.01" x2="81.14" y2="499.91"/><line x1="44.62" y1="509.18" x2="81.14" y2="530.28"/><line x1="44.62" y1="530.28" x2="81.14" y2="509.18"/><line x1="44.62" y1="518.45" x2="81.14" y2="539.55"/><line x1="44.62" y1="539.55" x2="81.14" y2="518.45"/><line x1="44.62" y1="527.72" x2="81.14" y2="548.82"/><line x1="44.62" y1="548.82" x2="81.14" y2="527.72"/><line x1="44.62" y1="536.99" x2="81.14" y2="558.09"/><line x1="44.62" y1="558.09" x2="81.14" y2="536.99"/><line x1="44.62" y1="546.26" x2="81.14" y2="567.36"/><line x1="44.62" y1="567.36" x2="81.14" y2="546.26"/><line x1="44.62" y1="555.53" x2="81.14" y2="576.63"/><line x1="44.62" y1="576.63" x2="81.14" y2="555.53"/></g></g></g></g>
<!-- white hexagon -->
<g>
<polygon points="67,618 82.6,627 82.6,645 67,654 51.4,645 51.4,627" fill="#f0f1f1"/>
<g stroke="#29313a" stroke-width="2"><line x1="67" y1="618" x2="67" y2="654"/><line x1="51.4" y1="627" x2="82.6" y2="645"/><line x1="51.4" y1="645" x2="82.6" y2="627"/></g>
<polygon points="67,636 67,618 51.4,627" fill="#d5d7d8" opacity="0"/>
</g>
</svg>
<!-- chevron tab -->
<div class="abs" style="left:96px;top:1423px;width:38px;height:89px;background:#545d61;border-radius:8px 0 0 8px"></div>
<svg class="abs" style="left:96px;top:1423px" width="38" height="89" viewBox="0 0 38 89"><polyline points="14,30 28,44.5 14,59" fill="none" stroke="#fff" stroke-width="5" stroke-linecap="round" stroke-linejoin="round"/></svg>
<!-- help -->
<svg class="abs" style="left:42px;top:1576.6px" width="40.4" height="40.4" viewBox="0 0 24 24"><path fill="#c0c4c6" d="M12 2C6.48 2 2 6.48 2 12s4.48 10 10 10 10-4.48 10-10S17.52 2 12 2zm1 17h-2v-2h2v2zm2.07-7.75l-.9.92C13.45 12.9 13 13.5 13 15h-2v-.5c0-1.1.45-2.1 1.17-2.83l1.24-1.26c.37-.36.59-.86.59-1.41 0-1.1-.9-2-2-2s-2 .9-2 2H8c0-2.21 1.79-4 4-4s4 1.79 4 4c0 .88-.36 1.68-.93 2.25z"/></svg>
<div class="t" style="left:24.8px;top:1658.2px;font-size:22.5px;color:#f0f1f2;transform:scaleX(0.9267);-webkit-text-stroke:0.45px #29313a;"><span id="t_ver">v0.7.170</span></div>
<!-- left panel swirl icon -->
<svg class="abs" style="left:169.2px;top:235px" width="41.6" height="41.6" viewBox="-21.5 -21.5 43 43"><use href="#swirl"/></svg>
<!-- left panel round button -->
<div class="abs" style="left:150px;top:1622px;width:80px;height:80px;border-radius:50%;background:#252b2e"></div>
<svg class="abs" style="left:150px;top:1622px" width="80" height="80" viewBox="0 0 80 80"><polyline points="34,30 45,40.5 34,51" fill="none" stroke="#fff" stroke-width="4.2" stroke-linecap="butt" stroke-linejoin="miter"/></svg>

<svg width="0" height="0" style="position:absolute"><defs><g id="swirl"><path fill="#ffffff" d="M0,0 Q-8.43,-12.04 -1.83,-20.92 L11.81,-15.76 Q-8.66,-8.61 0,0Z"/><path fill="#c9c9c9" d="M0,0 Q4.16,-14.10 15.21,-14.47 L19.69,-0.60 Q1.33,-12.14 0,0Z"/><path fill="#ffffff" d="M0,0 Q13.62,-5.54 20.80,2.87 L12.74,15.02 Q10.32,-6.53 0,0Z"/><path fill="#c9c9c9" d="M0,0 Q12.82,7.19 10.73,18.05 L-3.80,19.32 Q11.54,4.00 0,0Z"/><path fill="#ffffff" d="M0,0 Q2.37,14.51 -7.43,19.64 L-17.48,9.08 Q4.07,11.51 0,0Z"/><path fill="#c9c9c9" d="M0,0 Q-9.86,10.90 -19.99,6.44 L-18.00,-8.00 Q-6.47,10.36 0,0Z"/><path fill="#ffffff" d="M0,0 Q-14.67,-0.92 -17.50,-11.61 L-4.96,-19.06 Q-12.13,1.40 0,0Z"/></g></defs></svg>
<svg class="abs" style="left:150px;top:50px" width="370" height="110" viewBox="0 0 2576 766"><polygon points="331,376 331,125 549,250" fill="#60d3b1"/><polygon points="331,376 549,250 549,501" fill="#4fb3a3"/><polygon points="331,376 549,501 331,627" fill="#60d3b1"/><polygon points="331,376 331,627 113,501" fill="#4fb3a3"/><polygon points="331,376 113,501 113,250" fill="#60d3b1"/><polygon points="331,376 113,250 331,125" fill="#4fb3a3"/><g stroke="#1f1f1f" stroke-width="22"><line x1="331" y1="118" x2="331" y2="634"/><line x1="106" y1="246" x2="556" y2="506"/><line x1="106" y1="506" x2="556" y2="246"/></g></svg>
<svg class="abs" style="left:240px;top:78px" width="270" height="56" viewBox="240 78 270 56"><g fill="#d4d4d4"><rect x="249.1" y="84.8" width="8.6" height="42.2"/><polygon points="257.7,99.8 280,84.8 292.2,84.8 268.3,105.9 292.2,127 280,127 257.7,111.2"/><path fill-rule="evenodd" d="M292.7,127 L309.1,84.8 L319.1,84.8 L335.4,127 Z M313.8,98.9 L321.1,117.7 L308.9,117.7 L305.2,127.3 L303.0,127.3 Z"/><path d="M335,84.8 L371.3,84.8 Q379.8,84.8 379.8,93.3 L379.8,127 L370.8,127 L370.8,96 Q370.8,94.2 369,94.2 L335,94.2 Z"/><rect x="338.8" y="96.4" width="9" height="30.6"/><polygon points="379.8,84.8 390,84.8 400.6,111.8 412.2,84.8 421.5,84.8 405,127 397.2,127"/><path fill-rule="evenodd" d="M411.5,127 L427.9,84.8 L437.9,84.8 L454.2,127 Z M432.6,98.9 L439.9,117.7 L427.7,117.7 L424.0,127.3 L421.8,127.3 Z"/><path d="M498.5,84.8 L498.5,94.2 L467,94.2 Q465.2,94.2 465.2,96 L465.2,99.2 Q465.2,101 467,101 L491,101 Q498.5,101 498.5,108.5 L498.5,119.5 Q498.5,127 491,127 L457.1,127 L457.1,117.7 L488.2,117.7 Q490,117.7 490,115.9 L490,111.8 Q490,110 488.2,110 L464.6,110 Q457.1,110 457.1,102.5 L457.1,92.3 Q457.1,84.8 464.6,84.8 Z"/></g></svg>
<svg class="abs" style="left:550px;top:70px" width="72" height="68" viewBox="550 70 72 68"><g fill="#ececec"><rect x="579.6" y="78" width="13.5" height="2.8"/><rect x="572.1" y="81.5" width="27.8" height="2.8"/><rect x="574.2" y="84.3" width="23.5" height="45.4"/><rect x="558.2" y="95.2" width="55.8" height="3"/><rect x="559" y="98.2" width="14" height="31.5"/><rect x="599.2" y="98.2" width="14" height="31.5"/></g><g fill="#1f1f1f"><rect x="578.3" y="86.9" width="5.8" height="4.3"/><rect x="588" y="86.9" width="5.8" height="4.3"/><rect x="578.3" y="93.9" width="5.8" height="4.3"/><rect x="588" y="93.9" width="5.8" height="4.3"/><rect x="578.3" y="100.9" width="5.8" height="4.3"/><rect x="588" y="100.9" width="5.8" height="4.3"/><rect x="578.3" y="107.9" width="5.8" height="4.3"/><rect x="588" y="107.9" width="5.8" height="4.3"/><rect x="563.2" y="101.1" width="5.8" height="4.7"/><rect x="603.3" y="101.1" width="5.8" height="4.7"/><rect x="563.2" y="108.1" width="5.8" height="4.7"/><rect x="603.3" y="108.1" width="5.8" height="4.7"/><rect x="563.2" y="115.1" width="5.8" height="4.7"/><rect x="603.3" y="115.1" width="5.8" height="4.7"/><rect x="563.2" y="122.1" width="5.8" height="4.7"/><rect x="603.3" y="122.1" width="5.8" height="4.7"/><path d="M578.6,129.7 L578.6,122 A7.4,7.4 0 0,1 593.4,122 L593.4,129.7 Z"/><rect x="573" y="98.2" width="1.2" height="31.5"/><rect x="597.7" y="98.2" width="1.5" height="31.5"/></g></svg>
<svg class="abs" style="left:645px;top:76px" width="36" height="56" viewBox="645 76 36 56"><line x1="672.3" y1="83.1" x2="652.7" y2="125.5" stroke="#f0f0f0" stroke-width="2.3"/></svg>
<div class="t" style="left:706.5px;top:65.7px;font-size:22.8px;color:#f0f0f0;transform:scaleX(1.0606);-webkit-text-stroke:0.5px #1f1f1f;"><span id="t_name">Name</span></div>
<div class="t" style="left:705.5px;top:101.5px;font-size:30.0px;color:#e2e2e2;transform:scaleX(1.0484);-webkit-text-stroke:0.8px #1f1f1f;"><span id="t_untitled">Untitled View</span></div>
<div class="abs" style="left:707px;top:146.6px;width:306px;height:2.2px;background:#f2f2f2"></div>
<svg class="abs" style="left:1048px;top:80px" width="58" height="46" viewBox="1048 80 58 46"><g fill="none" stroke="#fff" stroke-width="3" stroke-linejoin="round" stroke-linecap="round">
<path d="M1063.5,119 C1057,119 1054,114.5 1054,110.5 C1054,105.5 1058,102.2 1062.3,102.4 C1062.5,95 1068.5,89.3 1076.2,89.3 C1082.6,89.3 1087.3,93.2 1089,98.8 C1095,98.6 1099.9,103 1099.9,108.8 C1099.9,114.6 1095.5,119 1090,119 Z"/>
<polyline points="1070,106.5 1074.8,111.2 1083.6,101.5" stroke-width="2.6" stroke-linecap="butt" stroke-linejoin="miter"/></g></svg>
<div class="abs" style="left:1510px;top:136.7px;width:470px;height:66.3px;background:#1b1b1b;border-radius:16px 16px 0 0"></div>
<div class="abs" style="left:1730px;top:136.7px;width:250px;height:66.3px;background:#28393a;border-radius:0 16px 0 0"></div>
<svg class="abs" style="left:1540.6px;top:149.6px" width="38.6" height="38.6" viewBox="-21.5 -21.5 43 43"><use href="#swirl"/></svg>
<div class="t" style="left:1597.5px;top:154.4px;font-size:30.0px;color:#ffffff;transform:scaleX(1.0815);-webkit-text-stroke:0.7px #1b1b1b;"><span id="t_design">Design</span></div>
<div class="t" style="left:1829.0px;top:154.4px;font-size:30.0px;color:#ffffff;transform:scaleX(1.1023);-webkit-text-stroke:0.7px #28393a;"><span id="t_operate">Operate</span></div>
<svg class="abs" style="left:1760px;top:140px" width="52" height="58" viewBox="1760 140 52 58">
<path d="M1766.8,187.5 L1766.8,178.5 C1766.8,172 1771,168.8 1777.2,168.7 C1779.5,170.8 1782.5,171.9 1786,171.9 C1789.5,171.9 1792.5,170.8 1794.8,168.7 C1801,168.8 1805.2,172 1805.2,178.5 L1805.2,187.5 C1805.2,191 1803.2,192.9 1799.8,192.9 L1772.2,192.9 C1768.8,192.9 1766.8,191 1766.8,187.5 Z" fill="#414a51"/>
<circle cx="1786" cy="158.2" r="9.7" fill="#414a51"/>
<path d="M1775.2,155.2 C1775.2,149.2 1780,145.2 1786,145.2 C1792,145.2 1796.8,149.2 1796.8,155.2" fill="none" stroke="#6b7b85" stroke-width="1.4"/>
<rect x="1769.9" y="154.9" width="5.1" height="9" rx="2.2" fill="#6b7b85"/><rect x="1797" y="154.9" width="5.1" height="9" rx="2.2" fill="#6b7b85"/>
<path d="M1797.5,161.5 C1796,163.6 1792,164.2 1786.3,164.2" fill="none" stroke="#6b7b85" stroke-width="2" stroke-linecap="round"/>
<circle cx="1786" cy="182.4" r="6.6" fill="none" stroke="#56dcb7" stroke-width="2.5" stroke-dasharray="5.4 1.5" transform="rotate(-62 1786 182.4)"/>
<path d="M1786.6,175.8 A6.6,6.6 0 0,1 1790.6,177.6" fill="none" stroke="#3b9c8c" stroke-width="2.5" stroke-dasharray="1.6 1.2"/>
</svg>
<svg class="abs" style="left:2515px;top:70px" width="90" height="66" viewBox="2515 70 90 66"><polygon points="2546.00,83.20 2563.20,91.48 2567.45,110.10 2555.55,125.02 2536.45,125.02 2524.55,110.10 2528.80,91.48" fill="#3c6bdc" stroke="#fff" stroke-width="2" stroke-linejoin="round"/><g stroke="#fff" fill="none"><circle cx="2546" cy="105.5" r="9.2" stroke-width="2.4"/><line x1="2546.00" y1="103.00" x2="2546.00" y2="90.30" stroke-width="1.7"/><line x1="2547.95" y1="103.94" x2="2557.88" y2="96.02" stroke-width="1.7"/><line x1="2548.44" y1="106.06" x2="2560.82" y2="108.88" stroke-width="1.7"/><line x1="2547.08" y1="107.75" x2="2552.60" y2="119.19" stroke-width="1.7"/><line x1="2544.92" y1="107.75" x2="2539.40" y2="119.19" stroke-width="1.7"/><line x1="2543.56" y1="106.06" x2="2531.18" y2="108.88" stroke-width="1.7"/><line x1="2544.05" y1="103.94" x2="2534.12" y2="96.02" stroke-width="1.7"/></g><circle cx="2546" cy="105.5" r="2" fill="#fff"/><circle cx="2573.6" cy="91.5" r="20.6" fill="#fff"/></svg>
<div class="t" style="left:2566.3px;top:82.9px;font-size:18.6px;color:#111;transform:scaleX(1.2375);-webkit-text-stroke:0.25px #fff;"><span id="t_badge">3</span></div>
<svg class="abs" style="left:2618.5px;top:80.1px" width="47" height="47" viewBox="0 0 24 24"><path fill="#fff" d="M19.14 12.94c.04-.3.06-.61.06-.94 0-.32-.02-.64-.07-.94l2.03-1.58c.18-.14.23-.41.12-.61l-1.92-3.32c-.12-.22-.37-.29-.59-.22l-2.39.96c-.5-.38-1.03-.7-1.62-.94l-.36-2.54c-.04-.24-.24-.41-.48-.41h-3.84c-.24 0-.43.17-.47.41l-.36 2.54c-.59.24-1.13.57-1.62.94l-2.39-.96c-.22-.08-.47 0-.59.22L2.74 8.87c-.12.21-.08.47.12.61l2.03 1.58c-.05.3-.09.63-.09.94s.02.64.07.94l-2.03 1.58c-.18.14-.23.41-.12.61l1.92 3.32c.12.22.37.29.59.22l2.39-.96c.5.38 1.03.7 1.62.94l.36 2.54c.05.24.24.41.48.41h3.84c.24 0 .44-.17.47-.41l.36-2.54c.59-.24 1.13-.56 1.62-.94l2.39.96c.22.08.47 0 .59-.22l1.92-3.32c.12-.22.07-.47-.12-.61l-2.01-1.58zM12 15.6c-1.98 0-3.6-1.62-3.6-3.6s1.62-3.6 3.6-3.6 3.6 1.62 3.6 3.6-1.62 3.6-3.6 3.6z"/></svg>
<svg class="abs" style="left:2698px;top:80px" width="48" height="48" viewBox="2698 80 48 48"><path fill="#fff" d="M2722,85.2 C2724,85.2 2725.2,86.6 2725.2,88.3 L2725.2,89.2 C2731.5,90.6 2734.8,95.8 2734.8,102.5 C2734.8,110.5 2737.5,113 2740.3,115.8 L2740.3,116.6 L2703.6,116.6 L2703.6,115.8 C2706.4,113 2709.2,110.5 2709.2,102.5 C2709.2,95.8 2712.5,90.6 2718.8,89.2 L2718.8,88.3 C2718.8,86.6 2720,85.2 2722,85.2 Z M2717.4,118.2 L2726.6,118.2 C2726.4,120.5 2724.5,122 2722,122 C2719.5,122 2717.6,120.5 2717.4,118.2 Z"/></svg>
<svg class="abs" style="left:2786px;top:63.6px" width="80.2" height="80.4" viewBox="0 0 80.2 80.4"><defs><clipPath id="avc"><circle cx="40.1" cy="40.2" r="40.1"/></clipPath><filter id="avb" x="-10%" y="-10%" width="120%" height="120%"><feGaussianBlur stdDeviation="0.9"/></filter></defs><g clip-path="url(#avc)"><rect width="81" height="81" fill="#4a6a52"/><g filter="url(#avb)"><circle cx="40" cy="4" r="9" fill="#2f4b3e"/><circle cx="62" cy="14" r="8" fill="#2f4b3e"/><circle cx="72" cy="30" r="7" fill="#2f4b3e"/><circle cx="14" cy="42" r="6" fill="#2f4b3e"/><circle cx="22" cy="62" r="8" fill="#2f4b3e"/><circle cx="73" cy="62" r="8" fill="#2f4b3e"/><circle cx="8" cy="24" r="7" fill="#2f4b3e"/><circle cx="56" cy="6" r="6" fill="#2f4b3e"/><circle cx="30" cy="8" r="5" fill="#2f4b3e"/><circle cx="70" cy="48" r="5" fill="#2f4b3e"/><circle cx="12" cy="54" r="6" fill="#2f4b3e"/><circle cx="50" cy="14" r="4" fill="#2f4b3e"/><circle cx="26" cy="30" r="4" fill="#2f4b3e"/><line x1="5" y1="40" x2="22" y2="37" stroke="#6f9869" stroke-width="2.6" stroke-linecap="round"/><line x1="8" y1="30" x2="18" y2="44" stroke="#6f9869" stroke-width="2.6" stroke-linecap="round"/><line x1="20" y1="50" x2="40" y2="58" stroke="#6f9869" stroke-width="2.6" stroke-linecap="round"/><line x1="28" y1="44" x2="31" y2="62" stroke="#6f9869" stroke-width="2.6" stroke-linecap="round"/><line x1="33" y1="52" x2="46" y2="66" stroke="#6f9869" stroke-width="2.6" stroke-linecap="round"/><line x1="16" y1="46" x2="34" y2="44" stroke="#6f9869" stroke-width="2.6" stroke-linecap="round"/><line x1="60" y1="30" x2="74" y2="37" stroke="#6f9869" stroke-width="2.6" stroke-linecap="round"/><line x1="62" y1="41" x2="78" y2="41" stroke="#6f9869" stroke-width="2.6" stroke-linecap="round"/><line x1="58" y1="33" x2="66" y2="48" stroke="#6f9869" stroke-width="2.6" stroke-linecap="round"/><line x1="18" y1="9" x2="30" y2="17" stroke="#6f9869" stroke-width="2.6" stroke-linecap="round"/><line x1="46" y1="3" x2="58" y2="10" stroke="#6f9869" stroke-width="2.6" stroke-linecap="round"/><line x1="30" y1="12" x2="42" y2="9" stroke="#6f9869" stroke-width="2.6" stroke-linecap="round"/><line x1="64" y1="20" x2="72" y2="30" stroke="#6f9869" stroke-width="2.6" stroke-linecap="round"/><line x1="6" y1="50" x2="18" y2="60" stroke="#6f9869" stroke-width="2.6" stroke-linecap="round"/><line x1="12" y1="60" x2="22" y2="72" stroke="#6f9869" stroke-width="2.6" stroke-linecap="round"/><line x1="68" y1="52" x2="78" y2="50" stroke="#6f9869" stroke-width="2.6" stroke-linecap="round"/><line x1="60" y1="50" x2="70" y2="60" stroke="#6f9869" stroke-width="2.6" stroke-linecap="round"/><line x1="24" y1="36" x2="36" y2="42" stroke="#6f9869" stroke-width="2.6" stroke-linecap="round"/><line x1="36" y1="44" x2="48" y2="40" stroke="#6f9869" stroke-width="2.6" stroke-linecap="round"/><line x1="14" y1="20" x2="22" y2="30" stroke="#6f9869" stroke-width="2.6" stroke-linecap="round"/><line x1="10" y1="36" x2="24" y2="40" stroke="#93b387" stroke-width="1.6" stroke-linecap="round"/><line x1="26" y1="52" x2="38" y2="62" stroke="#93b387" stroke-width="1.6" stroke-linecap="round"/><line x1="62" y1="36" x2="74" y2="44" stroke="#93b387" stroke-width="1.6" stroke-linecap="round"/><line x1="40" y1="46" x2="52" y2="40" stroke="#93b387" stroke-width="1.6" stroke-linecap="round"/><path d="M17,82 C18,66 24,56 34,52 L44,54 L58,52 C66,58 68,70 66,82 Z" fill="#9fb1c0"/><path d="M40,52 L46,50 L50,58 L44,62 Z" fill="#d6dde0"/><path d="M40,36 L48,36 L47,54 L42,54 Z" fill="#d9cbbd"/><path d="M31,22 C31,12 38,9 45,10 C53,11 55,18 56,26 C58,42 64,60 62,76 L50,78 C52,62 50,48 48,40 C52,34 52,24 48,18 C42,14 36,18 35,28 C34,34 36,40 34,46 C30,58 32,70 42,82 L26,80 C24,66 26,54 30,44 C32,36 30,30 31,22Z" fill="#75624f"/><path d="M50,40 C54,52 56,66 54,78" stroke="#4f4036" stroke-width="1.2" fill="none"/><path d="M32,52 C30,62 32,72 36,80" stroke="#4f4036" stroke-width="1.2" fill="none"/><ellipse cx="44" cy="26.5" rx="7" ry="10.2" fill="#eadfd4"/><path d="M36.5,24 C37,15 44,13 50,17 C45,17 41,19 38.5,26 Z" fill="#75624f"/><ellipse cx="43.2" cy="32.6" rx="1.3" ry="0.8" fill="#c2453a"/><path d="M39,25.5 q1.6,0.9 3.2,0 M45.5,25.5 q1.6,0.9 3.2,0" stroke="#8c6f62" stroke-width="0.5" fill="none"/><circle cx="20.8" cy="12.6" r="1.8" fill="#f1f4ec"/><circle cx="19.3" cy="13.9" r="1.8" fill="#f1f4ec"/><circle cx="17.1" cy="12.0" r="1.8" fill="#f1f4ec"/><circle cx="17.5" cy="10.8" r="1.8" fill="#f1f4ec"/><circle cx="20.4" cy="10.7" r="1.8" fill="#f1f4ec"/><circle cx="22.9" cy="21.7" r="1.9" fill="#f1f4ec"/><circle cx="21.5" cy="23.0" r="1.9" fill="#f1f4ec"/><circle cx="19.0" cy="21.2" r="1.9" fill="#f1f4ec"/><circle cx="19.4" cy="19.7" r="1.9" fill="#f1f4ec"/><circle cx="22.4" cy="19.5" r="1.9" fill="#f1f4ec"/><circle cx="13.6" cy="27.1" r="1.4" fill="#f1f4ec"/><circle cx="12.3" cy="28.5" r="1.4" fill="#f1f4ec"/><circle cx="10.5" cy="27.3" r="1.4" fill="#f1f4ec"/><circle cx="11.8" cy="25.5" r="1.4" fill="#f1f4ec"/><circle cx="12.7" cy="25.6" r="1.4" fill="#f1f4ec"/><circle cx="34.8" cy="30.4" r="1.7" fill="#f1f4ec"/><circle cx="32.4" cy="31.7" r="1.7" fill="#f1f4ec"/><circle cx="31.3" cy="29.4" r="1.7" fill="#f1f4ec"/><circle cx="32.4" cy="28.3" r="1.7" fill="#f1f4ec"/><circle cx="34.2" cy="28.6" r="1.7" fill="#f1f4ec"/><circle cx="41.1" cy="35.6" r="1.8" fill="#f1f4ec"/><circle cx="40.5" cy="35.9" r="1.8" fill="#f1f4ec"/><circle cx="38.1" cy="33.6" r="1.8" fill="#f1f4ec"/><circle cx="38.8" cy="32.5" r="1.8" fill="#f1f4ec"/><circle cx="40.8" cy="32.3" r="1.8" fill="#f1f4ec"/><circle cx="34.0" cy="43.2" r="1.9" fill="#f1f4ec"/><circle cx="32.0" cy="45.0" r="1.9" fill="#f1f4ec"/><circle cx="30.0" cy="42.6" r="1.9" fill="#f1f4ec"/><circle cx="30.6" cy="41.5" r="1.9" fill="#f1f4ec"/><circle cx="33.6" cy="41.7" r="1.9" fill="#f1f4ec"/><circle cx="13.4" cy="63.1" r="1.7" fill="#f1f4ec"/><circle cx="11.9" cy="63.8" r="1.7" fill="#f1f4ec"/><circle cx="10.2" cy="62.1" r="1.7" fill="#f1f4ec"/><circle cx="10.6" cy="60.9" r="1.7" fill="#f1f4ec"/><circle cx="12.7" cy="60.3" r="1.7" fill="#f1f4ec"/><circle cx="59.6" cy="21.3" r="1.5" fill="#f1f4ec"/><circle cx="57.4" cy="22.6" r="1.5" fill="#f1f4ec"/><circle cx="56.4" cy="21.3" r="1.5" fill="#f1f4ec"/><circle cx="57.0" cy="19.6" r="1.5" fill="#f1f4ec"/><circle cx="59.3" cy="20.0" r="1.5" fill="#f1f4ec"/><circle cx="76.4" cy="29.7" r="1.4" fill="#f1f4ec"/><circle cx="75.0" cy="30.6" r="1.4" fill="#f1f4ec"/><circle cx="73.5" cy="28.7" r="1.4" fill="#f1f4ec"/><circle cx="74.6" cy="27.5" r="1.4" fill="#f1f4ec"/><circle cx="75.8" cy="27.7" r="1.4" fill="#f1f4ec"/><circle cx="66.5" cy="44.0" r="1.7" fill="#f1f4ec"/><circle cx="64.6" cy="44.8" r="1.7" fill="#f1f4ec"/><circle cx="63.3" cy="42.6" r="1.7" fill="#f1f4ec"/><circle cx="64.6" cy="41.2" r="1.7" fill="#f1f4ec"/><circle cx="66.0" cy="41.5" r="1.7" fill="#f1f4ec"/><circle cx="72.9" cy="52.4" r="1.5" fill="#f1f4ec"/><circle cx="72.3" cy="52.6" r="1.5" fill="#f1f4ec"/><circle cx="70.4" cy="51.4" r="1.5" fill="#f1f4ec"/><circle cx="71.7" cy="49.3" r="1.5" fill="#f1f4ec"/><circle cx="72.8" cy="49.5" r="1.5" fill="#f1f4ec"/><circle cx="63.2" cy="8.6" r="1.2" fill="#f1f4ec"/><circle cx="62.4" cy="9.3" r="1.2" fill="#f1f4ec"/><circle cx="60.7" cy="7.9" r="1.2" fill="#f1f4ec"/><circle cx="61.8" cy="6.7" r="1.2" fill="#f1f4ec"/><circle cx="63.0" cy="7.2" r="1.2" fill="#f1f4ec"/><circle cx="27.8" cy="17.0" r="1.2" fill="#f1f4ec"/><circle cx="27.0" cy="17.3" r="1.2" fill="#f1f4ec"/><circle cx="25.7" cy="15.9" r="1.2" fill="#f1f4ec"/><circle cx="26.5" cy="14.8" r="1.2" fill="#f1f4ec"/><circle cx="28.0" cy="15.2" r="1.2" fill="#f1f4ec"/><circle cx="38.3" cy="40.6" r="1.3" fill="#f1f4ec"/><circle cx="36.3" cy="41.2" r="1.3" fill="#f1f4ec"/><circle cx="35.6" cy="39.6" r="1.3" fill="#f1f4ec"/><circle cx="36.3" cy="38.7" r="1.3" fill="#f1f4ec"/><circle cx="38.2" cy="39.2" r="1.3" fill="#f1f4ec"/><circle cx="15.3" cy="70.1" r="1.2" fill="#f1f4ec"/><circle cx="13.5" cy="71.2" r="1.2" fill="#f1f4ec"/><circle cx="12.7" cy="70.0" r="1.2" fill="#f1f4ec"/><circle cx="14.1" cy="68.7" r="1.2" fill="#f1f4ec"/><circle cx="15.2" cy="69.4" r="1.2" fill="#f1f4ec"/><circle cx="69.4" cy="58.4" r="1.3" fill="#f1f4ec"/><circle cx="67.9" cy="59.4" r="1.3" fill="#f1f4ec"/><circle cx="66.6" cy="57.9" r="1.3" fill="#f1f4ec"/><circle cx="66.9" cy="57.1" r="1.3" fill="#f1f4ec"/><circle cx="69.0" cy="57.0" r="1.3" fill="#f1f4ec"/><circle cx="9.1" cy="46.2" r="1.0" fill="#f1f4ec"/><circle cx="8.2" cy="47.1" r="1.0" fill="#f1f4ec"/><circle cx="7.1" cy="46.6" r="1.0" fill="#f1f4ec"/><circle cx="7.8" cy="44.9" r="1.0" fill="#f1f4ec"/><circle cx="8.5" cy="45.0" r="1.0" fill="#f1f4ec"/><circle cx="27.4" cy="24.4" r="1.3" fill="#f1f4ec"/><circle cx="25.9" cy="25.4" r="1.3" fill="#f1f4ec"/><circle cx="24.6" cy="23.7" r="1.3" fill="#f1f4ec"/><circle cx="24.9" cy="23.1" r="1.3" fill="#f1f4ec"/><circle cx="27.0" cy="23.0" r="1.3" fill="#f1f4ec"/><circle cx="57.0" cy="28.6" r="1.1" fill="#f1f4ec"/><circle cx="55.4" cy="29.0" r="1.1" fill="#f1f4ec"/><circle cx="54.8" cy="27.8" r="1.1" fill="#f1f4ec"/><circle cx="55.9" cy="26.8" r="1.1" fill="#f1f4ec"/><circle cx="56.7" cy="27.0" r="1.1" fill="#f1f4ec"/><circle cx="47.1" cy="40.5" r="1.1" fill="#f1f4ec"/><circle cx="45.9" cy="41.2" r="1.1" fill="#f1f4ec"/><circle cx="44.8" cy="39.7" r="1.1" fill="#f1f4ec"/><circle cx="46.0" cy="38.8" r="1.1" fill="#f1f4ec"/><circle cx="46.5" cy="38.9" r="1.1" fill="#f1f4ec"/><line x1="26" y1="46" x2="38" y2="56" stroke="#557f57" stroke-width="2.8" stroke-linecap="round"/><line x1="30" y1="48" x2="32" y2="64" stroke="#557f57" stroke-width="2.8" stroke-linecap="round"/><line x1="34" y1="48" x2="46" y2="58" stroke="#557f57" stroke-width="2.8" stroke-linecap="round"/><line x1="38" y1="46" x2="50" y2="42" stroke="#557f57" stroke-width="2.8" stroke-linecap="round"/></g></g></svg>
<div class="abs" style="left:2904px;top:92.0px;width:36px;height:4.3px;background:#fff"></div>
<div class="abs" style="left:2904px;top:102.0px;width:36px;height:4.3px;background:#fff"></div>
<div class="abs" style="left:2904px;top:112.0px;width:36px;height:4.3px;background:#fff"></div>
<svg class="abs" style="left:2301px;top:279px" width="50" height="50" viewBox="0 0 24 24"><path fill="#f4f5f4" d="M3 17.25V21h3.75L17.81 9.94l-3.75-3.75L3 17.25zM20.71 7.04c.39-.39.39-1.02 0-1.41l-2.34-2.34c-.39-.39-1.02-.39-1.41 0l-1.83 1.83 3.75 3.75 1.83-1.83z"/></svg>
<div class="t" style="left:2364.8px;top:292.1px;font-size:26.5px;color:#ffffff;transform:scaleX(1.0186);-webkit-text-stroke:0.7px #111111;"><span id="t_new">New</span></div>
<svg class="abs" style="left:2461.9px;top:280px" width="48" height="48" viewBox="0 0 24 24"><path fill="#f4f5f4" d="M17 3H5c-1.11 0-2 .9-2 2v14c0 1.1.89 2 2 2h14c1.1 0 2-.9 2-2V7l-4-4zm-5 16c-1.66 0-3-1.34-3-3s1.34-3 3-3 3 1.34 3 3-1.34 3-3 3zm3-10H5V5h10v4z"/></svg>
<div class="t" style="left:2524.2px;top:292.1px;font-size:26.5px;color:#ffffff;transform:scaleX(1.0079);-webkit-text-stroke:0.7px #111111;"><span id="t_saveas">Save As</span></div>
<div class="abs" style="left:2654px;top:263.6px;width:222.2px;height:80.3px;background:#51b3a3;border-radius:17px"></div>
<div class="abs" style="left:2786px;top:263.6px;width:1.8px;height:80.3px;background:#b5bfbd"></div>
<div class="t" style="left:2685.4px;top:292.1px;font-size:26.5px;color:#ffffff;transform:scaleX(0.9828);-webkit-text-stroke:0.7px #51b3a3;"><span id="t_share">Share</span></div>
<svg class="abs" style="left:2809.85px;top:281.45px" width="44.7" height="44.7" viewBox="0 0 24 24" fill="none" stroke="#fff" stroke-width="2.2" stroke-linecap="round" stroke-linejoin="round"><path d="M10 13a5 5 0 0 0 7.54.54l3-3a5 5 0 0 0-7.07-7.07l-1.72 1.71"/><path d="M14 11a5 5 0 0 0-7.54-.54l-3 3a5 5 0 0 0 7.07 7.07l1.71-1.71"/></svg>
<svg class="abs" style="left:2940px;top:232px" width="56" height="56" viewBox="2940 232 56 56"><g stroke="#fff" stroke-width="7.2" stroke-linecap="round">
<line x1="2949" y1="241.8" x2="2969" y2="277.4"/><line x1="2983.7" y1="241.8" x2="2961.3" y2="277.4"/></g></svg>
<div class="abs" style="left:2953px;top:798.2px;width:80px;height:221px;background:#456579;border-radius:9px 0 0 9px"></div>
<div class="abs" style="left:2953px;top:798.2px;width:69px;height:221px;overflow:hidden"><div id="t_fb" style="position:absolute;will-change:transform;left:32.1px;top:181.2px;font-size:32px;line-height:1;color:#fff;white-space:nowrap;transform:rotate(-90deg);transform-origin:0 0">Feedback</div></div>
<div class="abs" style="left:2661.8px;top:1395.7px;width:246.2px;height:320px;background:#293d78"></div>
<div class="abs" style="left:2657.8px;top:1391.7px;width:250.2px;height:4px;background:repeating-linear-gradient(90deg,#4169e1 0,#4169e1 7.6px,#111 7.6px,#111 11.2px)"></div>
<div class="abs" style="left:2657.8px;top:1391.7px;width:4px;height:320px;background:repeating-linear-gradient(180deg,#4169e1 0,#4169e1 7.6px,#111 7.6px,#111 11.2px)"></div>
<div class="node" style="left:2701.2px;top:1406.6px"></div>
<div class="badge" style="left:2689.6px;top:1458.7px"><svg style="position:absolute;left:5px;top:6px" width="14" height="12" viewBox="0 0 14 12"><g fill="#fff"><rect x="4.2" y="0.6" width="5.6" height="4.6"/><rect x="0.6" y="6" width="12.8" height="4.6"/></g><g fill="#3d6adb"><rect x="5.4" y="2" width="1.2" height="1.6"/><rect x="7.6" y="2" width="1.2" height="1.6"/><rect x="1.8" y="7.6" width="1.2" height="1.6"/><rect x="4.4" y="7.6" width="1.2" height="1.6"/><rect x="7" y="7.6" width="1.2" height="1.6"/><rect x="9.6" y="7.6" width="1.2" height="1.6"/><rect x="11.6" y="7.6" width="0.9" height="1.6"/></g></svg></div>
<div class="node" style="left:2701.2px;top:1640.9px"></div>
<div class="badge" style="left:2689.6px;top:1690.7px"><svg style="position:absolute;left:5px;top:6px" width="14" height="12" viewBox="0 0 14 12"><g fill="#fff"><rect x="4.2" y="0.6" width="5.6" height="4.6"/><rect x="0.6" y="6" width="12.8" height="4.6"/></g><g fill="#3d6adb"><rect x="5.4" y="2" width="1.2" height="1.6"/><rect x="7.6" y="2" width="1.2" height="1.6"/><rect x="1.8" y="7.6" width="1.2" height="1.6"/><rect x="4.4" y="7.6" width="1.2" height="1.6"/><rect x="7" y="7.6" width="1.2" height="1.6"/><rect x="9.6" y="7.6" width="1.2" height="1.6"/><rect x="11.6" y="7.6" width="0.9" height="1.6"/></g></svg></div>
<div class="abs" style="left:2675.2px;top:1513.0px;width:150.4px;height:22.0px;border-radius:3px;background:#a2a9bb;overflow:hidden"><div style="position:absolute;will-change:transform;left:50%;transform:translateX(-50%) scaleX(1.0096);transform-origin:50% 0;top:2.3px;font-size:15.5px;line-height:1;color:#1e1e22;-webkit-text-stroke:0.12px #a2a9bb;white-space:nowrap"><span id="l_pg">postgresql-primary-0</span></div></div>
<div class="abs" style="left:2776.1px;top:1598px;width:100px;height:100px;border-radius:50%;background:#303030"></div>
<svg class="abs" style="left:2800px;top:1618px" width="52" height="60" viewBox="2800 1618 52 60"><g fill="#e6e6e6">
<path d="M2826,1623.9 L2842.2,1650.3 L2836.2,1657.4 Q2834.6,1660.5 2834.2,1664.6 L2817.9,1664.6 Q2817.5,1660.5 2815.9,1657.4 L2809.9,1650.3 Z"/>
<rect x="2812.3" y="1667.8" width="27.5" height="4.4"/></g>
<line x1="2825.9" y1="1624.5" x2="2825.9" y2="1645" stroke="#303030" stroke-width="1.5"/>
<circle cx="2825.9" cy="1648.3" r="3.4" fill="#e6e6e6" stroke="#303030" stroke-width="1.1"/></svg>
<div class="abs" style="left:2925.8px;top:1622.3px;width:80px;height:80px;border-radius:50%;background:#252b2e"></div>
<svg class="abs" style="left:2925.8px;top:1622.3px" width="80" height="80" viewBox="0 0 80 80"><polyline points="45.5,29.5 34.5,40 45.5,50.5" fill="none" stroke="#fff" stroke-width="4.2"/></svg>
<div class="abs" style="left:280px;top:886px;width:1581px;height:800px;background:#000;border-radius:13px;overflow:hidden">
<div class="abs" style="left:0;top:0;width:1581px;height:128px;background:linear-gradient(90deg,#2b343a 0,#333e44 50%,#3c4950 100%)"></div>
<div class="abs" style="left:1064px;top:128px;width:2.2px;height:672px;background:#fff"></div>
<div class="abs" style="left:1066.2px;top:128px;width:515px;height:66px;background:#424242"></div>
<div class="abs" style="left:0px;top:156px;width:14.2px;height:28px;background:#fff"></div>
</div>
<div class="abs" style="left:1079.0px;top:898.2px;width:7.4px;height:7.4px;border-radius:50%;background:#e6edf0"></div>
<div class="abs" style="left:1091.0px;top:898.2px;width:7.4px;height:7.4px;border-radius:50%;background:#e6edf0"></div>
<div class="abs" style="left:1103.0px;top:898.2px;width:7.4px;height:7.4px;border-radius:50%;background:#e6edf0"></div>
<div class="abs" style="left:1333.8px;top:917.8px;width:352.2px;height:62.4px;background:#6f7880;border-radius:13px 13px 11px 11px"></div>
<div class="abs" style="left:1333.8px;top:980.4px;width:352.2px;height:1.8px;background:#cfd6da"></div>
<div class="t" style="left:1349.6px;top:934.3px;font-size:30.0px;color:#fff;transform:scaleX(1.0883);-webkit-text-stroke:0.6px #6f7880;"><span id="t_follower">follower</span></div>
<svg class="abs" style="left:1648px;top:940px" width="30" height="22" viewBox="1648 940 30 22"><polygon points="1652.9,945.7 1672,945.7 1662.45,956.2" fill="#fff"/></svg>
<svg class="abs" style="left:1694.7px;top:925.7px" width="48" height="48" viewBox="0 0 24 24"><path fill="#fff" d="M15.5 14h-.79l-.28-.27C15.41 12.59 16 11.11 16 9.5 16 5.91 13.09 3 9.5 3S3 5.91 3 9.5 5.91 16 9.5 16c1.61 0 3.09-.59 4.23-1.57l.27.28v.79l5 4.99L20.49 19l-4.99-5zm-6 0C7.01 14 5 11.99 5 9.5S7.01 5 9.5 5 14 7.01 14 9.5 11.99 14 9.5 14z"/></svg>
<svg class="abs" style="left:1765.2px;top:926.4px" width="48" height="48" viewBox="0 0 24 24"><path fill="#e4ecef" d="M19 6.41L17.59 5 12 10.59 6.41 5 5 6.41 10.59 12 5 17.59 6.41 19 12 13.41 17.59 19 19 17.59 13.41 12z"/></svg>
<div class="t" style="left:279.2px;top:1019.5px;font-size:20.5px;color:#fff;font-family:'Liberation Mono',monospace;transform:scaleX(1.1424);-webkit-text-stroke:0.5px #000;"><span id="t_term">redis-follower-7dddf7c979-bvqkp-e0d72</span></div>
<svg class="abs" style="left:1354px;top:1026px" width="50" height="42" viewBox="1354 1026 50 42">
<rect x="1360" y="1032.1" width="37.9" height="29.6" rx="3.2" fill="none" stroke="#fff" stroke-width="4.4"/>
<polygon points="1366.6,1042.2 1369.7,1039.9 1377.1,1047.4 1369.7,1055.4 1366.6,1052.5 1372,1047.4" fill="#c8c8c8"/>
<rect x="1378.9" y="1051" width="12.9" height="4.4" fill="#c8c8c8"/></svg>
<div class="abs" style="left:1405px;top:1020px;width:431.5px;height:56px;overflow:hidden">
<div class="t" style="left:7.3px;top:14.5px;font-size:26.0px;color:#fff;transform:scaleX(1.1251);-webkit-text-stroke:0.5px #424242;"><span id="t_row">redis-follower-7dddf7c979-bvq</span>kp-e0d72</div>
</div>
<svg class="abs" style="left:1796.5px;top:1022.7px" width="49" height="49" viewBox="0 0 24 24"><path fill="#fff" d="M6 19c0 1.1.9 2 2 2h8c1.1 0 2-.9 2-2V7H6v12zM19 4h-3.5l-1-1h-5l-1 1H5v2h14V4z"/></svg>
</div>
</body>
</html>
